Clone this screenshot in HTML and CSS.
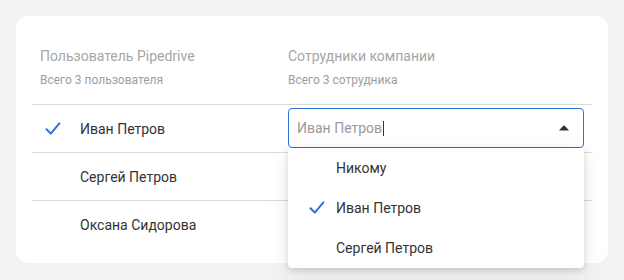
FILE: index.html
```html
<!DOCTYPE html>
<html lang="ru">
<head>
<meta charset="utf-8">
<link rel="stylesheet" href="styles.css">
</head>
<body>
<div class="card">
  <div class="head">
    <div class="col-left head-left">
      <div class="title">Пользователь Pipedrive</div>
      <div class="sub">Всего 3 пользователя</div>
    </div>
    <div class="col-right">
      <div class="title">Сотрудники компании</div>
      <div class="sub">Всего 3 сотрудника</div>
    </div>
  </div>
  <div class="row">
    <div class="col-left user">
      <span class="mark"><svg width="16" height="14" viewBox="0 0 16 14"><path d="M1.5 7.2 L5.8 11.6 L14.4 1.4" fill="none" stroke="#2b74d8" stroke-width="2" stroke-linecap="round" stroke-linejoin="round"/></svg></span>
      <span class="name">Иван Петров</span>
    </div>
    <div class="col-right select-cell">
      <div class="select">
        <span class="value">Иван Петров</span><span class="caret"></span>
        <svg class="arrow" width="10" height="6" viewBox="0 0 10 6"><path d="M0 5.5 L4 1 Q5 0 6 1 L10 5.5 Z" fill="#333"/></svg>
      </div>
      <div class="menu">
        <div class="opt"><span class="mark"></span>Никому</div>
        <div class="opt"><span class="mark"><svg width="16" height="14" viewBox="0 0 16 14"><path d="M1.5 7.2 L5.8 11.6 L14.4 1.4" fill="none" stroke="#2b74d8" stroke-width="2" stroke-linecap="round" stroke-linejoin="round"/></svg></span>Иван Петров</div>
        <div class="opt"><span class="mark"></span>Сергей Петров</div>
      </div>
    </div>
  </div>
  <div class="row">
    <div class="col-left user"><span class="mark"></span><span class="name">Сергей Петров</span></div>
    <div class="col-right"></div>
  </div>
  <div class="row">
    <div class="col-left user"><span class="mark"></span><span class="name">Оксана Сидорова</span></div>
    <div class="col-right"></div>
  </div>
</div>
</body>
</html>
```
FILE: styles.css
```css
* { box-sizing: border-box; }
html, body { margin: 0; }
body {
  background: #f1f2f2;
  padding: 16px;
  font-family: Roboto, "Liberation Sans", sans-serif;
  width: 624px;
  height: 280px;
  overflow: hidden;
}
.card {
  background: #fff;
  border-radius: 12px;
  padding: 30px 16px 15px;
  width: 592px;
}
.head {
  display: flex;
  padding-bottom: 16px;
}
.col-left { width: 256px; flex: none; }
.col-right { flex: 1; padding-right: 8px; }
.head-left { padding-left: 8px; }
.title {
  font-size: 14px;
  line-height: 20px;
  color: #a6a6a6;
}
.sub {
  margin-top: 6px;
  font-size: 12px;
  line-height: 16px;
  color: #9e9e9e;
}
.row {
  display: flex;
  height: 48px;
  border-top: 1px solid #dcdcdc;
}
.user {
  display: flex;
  align-items: center;
  font-size: 14px;
  color: #333;
}
.user .mark {
  width: 48px;
  display: flex;
  justify-content: flex-end;
  padding-right: 19px;
}
.select-cell { position: relative; padding-top: 3px; }
.select {
  height: 40px;
  border: 1px solid #2b74d8;
  border-radius: 4px;
  display: flex;
  align-items: center;
  padding: 0 14px 0 8px;
  font-size: 14px;
}
.value { color: #9a9a9a; }
.caret {
  display: inline-block;
  width: 1px;
  height: 15px;
  background: #333;
  margin-left: 1px;
}
.arrow { margin-left: auto; }
.menu {
  position: absolute;
  top: 43px;
  left: 0;
  right: 8px;
  background: #fff;
  border-radius: 4px;
  box-shadow: 0 2px 6px rgba(0,0,0,0.14), 0 6px 24px rgba(0,0,0,0.08);
  z-index: 2;
}
.opt {
  height: 40px;
  display: flex;
  align-items: center;
  font-size: 14px;
  color: #333;
}
.opt .mark {
  width: 48px;
  display: flex;
  padding-left: 21px;
}
```
